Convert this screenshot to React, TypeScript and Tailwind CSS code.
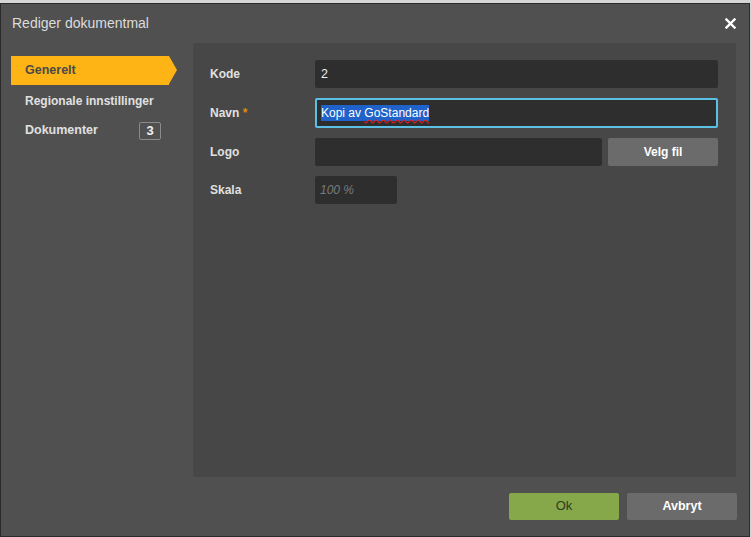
export default function App() {
  const font = { fontFamily: '"Liberation Sans", Arial, sans-serif' };
  return (
    <div className="w-[751px] h-[537px] bg-[#d6d6d6] pt-[3px] overflow-hidden" style={font}>
      <div className="w-[750px] h-[534px] bg-[#505050] border border-[#2a2a2a] flex flex-col">
        {/* header */}
        <div className="h-[38px] flex items-center justify-between pl-[11px] pr-[13px]">
          <span className="text-[14px] text-[#dcdcdc]">Rediger dokumentmal</span>
          <svg width="11" height="11" viewBox="0 0 11 11" className="mt-[1px]">
            <path d="M1.5 1.5 L9.5 9.5 M9.5 1.5 L1.5 9.5" stroke="#ffffff" strokeWidth="2.4" strokeLinecap="square" />
          </svg>
        </div>

        {/* body */}
        <div className="flex flex-1 pl-[10px] pr-[13px] pt-[1px]">
          <nav className="w-[182px] pt-[13px] flex flex-col">
            <div className="relative h-[29px] w-[158px] bg-[#feb414] flex items-center pl-[14px]">
              <span className="text-[12.5px] font-bold text-[#4a4a4a]">Generelt</span>
              <div className="absolute right-[-8px] top-0 w-0 h-0 border-t-[14.5px] border-b-[14.5px] border-l-[8px] border-t-transparent border-b-transparent border-l-[#feb414]" />
            </div>
            <div className="h-[31px] flex items-center pl-[14px] text-[12px] font-bold text-[#e0e0e0]">
              Regionale innstillinger
            </div>
            <div className="h-[29px] flex items-center pl-[14px] pr-[32px] justify-between text-[12.5px] font-bold text-[#e0e0e0]">
              <span>Dokumenter</span>
              <span className="h-[18px] min-w-[22px] px-[6px] flex items-center justify-center border border-[#8a8a8a] rounded-[2px] text-[13px] text-[#f0f0f0]">3</span>
            </div>
          </nav>

          <div className="flex-1 h-[434px] bg-[#474747] rounded-[2px] pl-[17px] pr-[18px] pt-[17px] flex flex-col gap-[10px]">
            <div className="flex items-center h-[28px]">
              <label className="w-[105px] text-[12px] font-bold text-[#e0e0e0] -mt-[1px]">Kode</label>
              <div className="flex-1 h-[28px] bg-[#2e2e2e] rounded-[2px] flex items-center px-[6px] text-[12.5px] text-[#f0f0f0]">2</div>
            </div>
            <div className="flex items-center h-[30px]">
              <label className="w-[105px] text-[12px] font-bold text-[#e0e0e0] -mt-[1px]">
                Navn <span className="text-[#e08a00]">*</span>
              </label>
              <div className="flex-1 h-[30px] bg-[#2e2e2e] rounded-[2px] border-2 border-[#5bc0e3] flex items-center px-[4px] text-[12px]">
                <span className="bg-[#1f62c9] text-white leading-[16px]">
                  Kopi av <span className="underline decoration-wavy decoration-[#e02020] underline-offset-[2px]">GoStandard</span>
                </span>
              </div>
            </div>
            <div className="flex items-center h-[28px] gap-[6px]">
              <label className="w-[99px] text-[12px] font-bold text-[#e0e0e0] -mt-[1px]">Logo</label>
              <div className="flex-1 h-[28px] bg-[#2e2e2e] rounded-[2px]" />
              <button className="w-[110px] h-[28px] bg-[#6b6b6b] rounded-[2px] text-[12px] font-bold text-white">Velg fil</button>
            </div>
            <div className="flex items-center h-[28px]">
              <label className="w-[105px] text-[12px] font-bold text-[#e0e0e0] -mt-[1px]">Skala</label>
              <div className="w-[82px] h-[28px] bg-[#2e2e2e] rounded-[2px] flex items-center px-[5px] text-[12px] italic text-[#7a7a7a]">100 %</div>
            </div>
          </div>
        </div>

        {/* footer */}
        <div className="h-[58px] flex items-center justify-end gap-[8px] pr-[12px] pb-[2px]">
          <button className="w-[110px] h-[27px] bg-[#86a84a] rounded-[2px] text-[13px] text-[#2f3a1f]">Ok</button>
          <button className="w-[110px] h-[27px] bg-[#6b6b6b] rounded-[2px] text-[12.5px] font-bold text-white">Avbryt</button>
        </div>
      </div>
    </div>
  );
}
